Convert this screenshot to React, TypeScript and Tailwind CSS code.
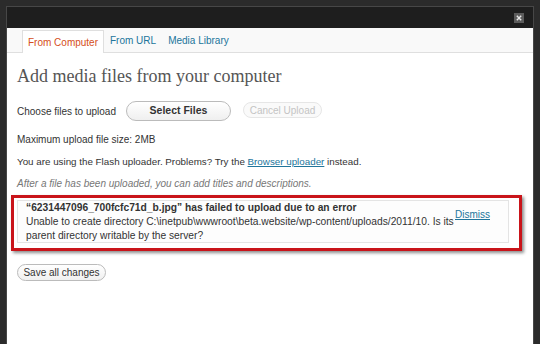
import React from "react";

export default function App() {
  return (
    <div className="w-[540px] h-[344px] bg-[#2b2b2b] pt-[6px] px-[6px] overflow-hidden font-['Liberation_Sans',Arial,sans-serif] text-[10px] text-[#333]">
      <div className="h-full border-x border-t border-[#474747] flex flex-col">
        <div className="h-[21px] bg-[#1e1e1e] flex items-center justify-end pr-[9px]">
          <div className="w-[10px] h-[10px] bg-[#5c5c5c] flex items-center justify-center">
            <svg width="6" height="6" viewBox="0 0 6 6">
              <path d="M0.8 0.8L5.2 5.2M5.2 0.8L0.8 5.2" stroke="#e8e8e8" strokeWidth="1.4" />
            </svg>
          </div>
        </div>
        <div className="flex-1 bg-white flex flex-col">
          <div className="h-[25px] bg-[#f9f9f9] border-b border-[#dfdfdf] flex items-end pl-[15px] pt-[2px]">
            <div className="h-[23px] -mb-px bg-white border-x border-t border-[#dfdfdf] px-[5px] flex items-center text-[#d54e21]">
              From Computer
            </div>
            <div className="h-[23px] px-[5px] border-x border-transparent flex items-center text-[#21759b]">From URL</div>
            <div className="h-[23px] px-[5px] border-x border-transparent flex items-center text-[#21759b]">Media Library</div>
          </div>
          <div className="pl-[10px] flex flex-col">
            <div className="mt-[11px] h-[24px] leading-[24px] font-['Liberation_Serif',Georgia,serif] text-[18px] text-[#555]">
              Add media files from your computer
            </div>
            <div className="mt-[13px] h-[20px] flex items-center">
              <span>Choose files to upload</span>
              <div className="ml-[10px] w-[105px] h-[20px] rounded-full border border-[#bbb] bg-gradient-to-b from-white to-[#efefef] flex items-center justify-center font-bold text-[10.5px]">
                Select Files
              </div>
              <div className="ml-[12px] w-[79px] h-[16px] self-start mt-px rounded-full border border-[#e6e6e6] bg-[#fafafa] flex items-center justify-center text-[#c4c4c4]">
                Cancel Upload
              </div>
            </div>
            <div className="mt-[12px] h-[14px] leading-[14px]">Maximum upload file size: 2MB</div>
            <div className="mt-[8px] h-[14px] leading-[14px] text-[9.8px]">
              You are using the Flash uploader. Problems? Try the{" "}
              <span className="text-[#21759b] underline">Browser uploader</span> instead.
            </div>
            <div className="mt-[8px] h-[14px] leading-[14px] italic text-[#777]">
              After a file has been uploaded, you can add titles and descriptions.
            </div>
            <div className="mt-[4px] -ml-[6px] w-[511px] h-[56px] border-[3px] border-[#c9141a] shadow-[2px_2px_3px_rgba(0,0,0,0.45)] pl-[3px] pt-[2px]">
              <div className="w-[492px] h-[43px] border border-[#e4e4e4] bg-[#fdfdfd] flex pl-[8px] text-[10.25px]">
                <div className="w-[429px] leading-[14px]">
                  <div className="font-bold">“6231447096_700fcfc71d_b.jpg” has failed to upload due to an error</div>
                  <div>
                    Unable to create directory C:\inetpub\wwwroot\beta.website/wp-content/uploads/2011/10. Is its parent directory writable by the server?
                  </div>
                </div>
                <div className="pt-[7px] leading-[14px] text-[#21759b] underline text-[10px]">Dismiss</div>
              </div>
            </div>
            <div className="mt-[13px] w-[89px] h-[17px] rounded-full border border-[#bbb] bg-gradient-to-b from-white to-[#f0f0f0] flex items-center justify-center">
              Save all changes
            </div>
          </div>
        </div>
      </div>
    </div>
  );
}
